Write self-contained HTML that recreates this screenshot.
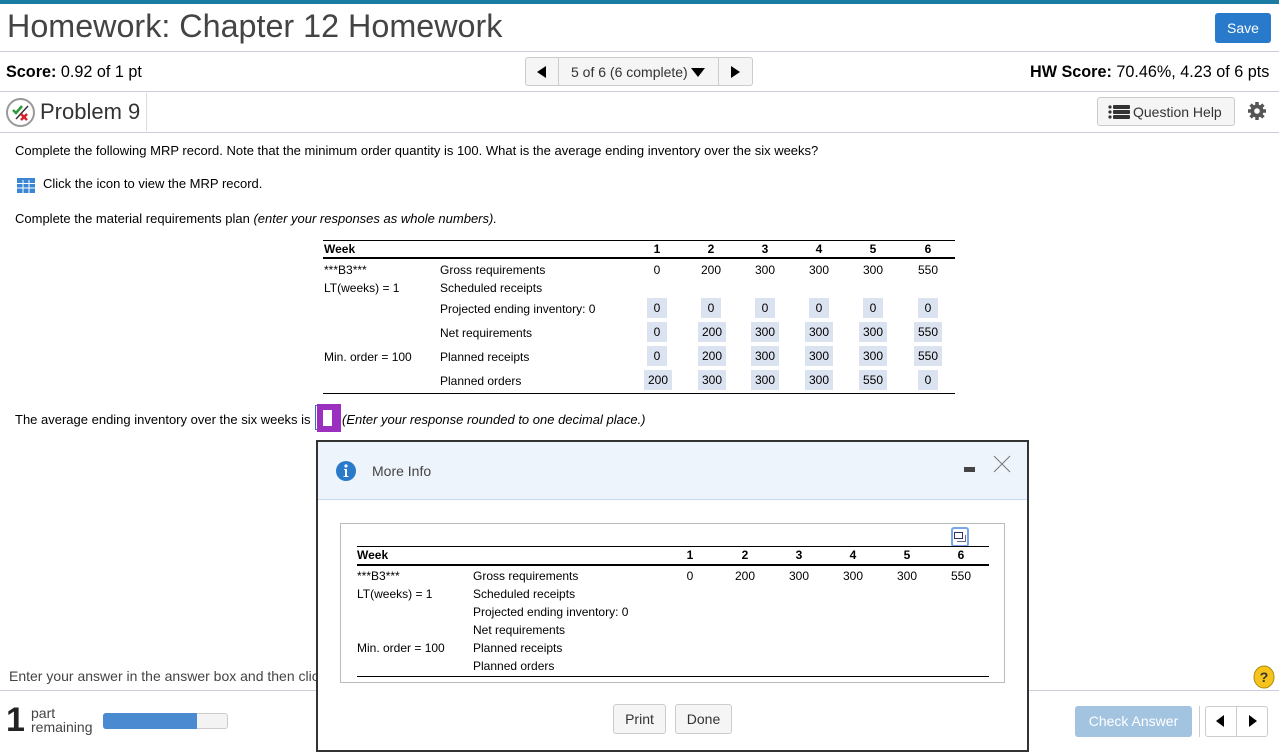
<!DOCTYPE html>
<html><head><meta charset="utf-8"><style>
*{margin:0;padding:0;box-sizing:border-box}
body{width:1279px;height:750px;overflow:hidden;background:#fff;font-family:"Liberation Sans",Arial,sans-serif;color:#000;position:relative;font-size:13px}
.a{position:absolute;white-space:nowrap}
.hl{position:absolute;left:0;width:1279px;height:1px;background:#c9ced8}
.c{position:absolute;text-align:center;width:40px;margin-left:-20px}
.bx{position:absolute;background:#dce3f0;text-align:center;height:20px;line-height:20px}
.btn{position:absolute;border:1px solid #ccc;border-radius:3px;background:#f5f5f5;color:#333;text-align:center}
</style></head><body>
<div class="a" style="left:0;top:0;width:1279px;height:4px;background:#1a7ba3"></div>
<div class="a" style="left:7px;top:8px;font-size:32.3px;color:#444">Homework: Chapter 12 Homework</div>
<div class="a" style="left:1215px;top:13px;width:56px;height:30px;background:#2a7acb;border-radius:3px;color:#fff;font-size:14px;line-height:30px;text-align:center">Save</div>
<div class="hl" style="top:51px"></div>
<div class="a" style="left:6px;top:63px;font-size:16.2px"><b>Score:</b> 0.92 of 1 pt</div>
<div class="btn" style="left:525px;top:57px;width:228px;height:29px"></div>
<div class="a" style="left:558px;top:57px;width:1px;height:29px;background:#ccc"></div>
<div class="a" style="left:718px;top:57px;width:1px;height:29px;background:#ccc"></div>
<svg class="a" style="left:537px;top:66px" width="10" height="12"><path d="M9 0V12L0 6Z" fill="#000"/></svg>
<div class="a" style="left:571px;top:64px;font-size:14px;color:#333">5 of 6 (6 complete)</div>
<svg class="a" style="left:691px;top:68px" width="14" height="9"><path d="M0 0H14L7 9Z" fill="#000"/></svg>
<svg class="a" style="left:731px;top:66px" width="10" height="12"><path d="M0 0V12L9 6Z" fill="#000"/></svg>
<div class="a" style="left:1030px;top:63px;font-size:16.2px"><b>HW Score:</b> 70.46%, 4.23 of 6 pts</div>
<div class="hl" style="top:91px"></div>
<svg class="a" style="left:5px;top:97px" width="31" height="31"><circle cx="15.5" cy="15.5" r="13.5" fill="#fff" stroke="#999" stroke-width="2"/><path d="M8 13l3 3 6-7" stroke="#2a9a3a" stroke-width="2.5" fill="none"/><path d="M11 22L23 9" stroke="#333" stroke-width="1.5"/><path d="M16 17l6 6M22 17l-6 6" stroke="#d8202a" stroke-width="2.5"/></svg>
<div class="a" style="left:40px;top:99px;font-size:22px;color:#333">Problem 9</div>
<div class="a" style="left:146px;top:93px;width:1px;height:38px;background:#ddd"></div>
<div class="btn" style="left:1097px;top:97px;width:138px;height:29px"></div>
<svg class="a" style="left:1108px;top:105px" width="22" height="14"><g fill="#333"><circle cx="2" cy="2" r="1.6"/><circle cx="2" cy="7" r="1.6"/><circle cx="2" cy="12" r="1.6"/><rect x="5" y="0" width="17" height="4" rx="1"/><rect x="5" y="5" width="17" height="4" rx="1"/><rect x="5" y="10" width="17" height="4" rx="1"/></g></svg>
<div class="a" style="left:1133px;top:104px;font-size:14px;color:#333">Question Help</div>
<svg class="a" style="left:1247px;top:101px" width="20" height="20" viewBox="0 0 20 20"><g fill="#555"><circle cx="10" cy="10" r="6.5"/><g stroke="#555" stroke-width="3.5"><path d="M10 1v18M1 10h18M3.6 3.6l12.8 12.8M16.4 3.6L3.6 16.4"/></g></g><circle cx="10" cy="10" r="2.8" fill="#fff"/></svg>
<div class="hl" style="top:132px"></div>
<div class="a" style="left:15px;top:143px">Complete the following MRP record. Note that the minimum order quantity is 100. What is the average ending inventory over the six weeks?</div>
<svg class="a" style="left:17px;top:178px" width="18" height="15"><rect width="18" height="15" fill="#3a86d6"/><g stroke="#fff" stroke-width="1"><path d="M0 5.5h18M0 10h18M6 2v13M12 2v13"/></g></svg>
<div class="a" style="left:43px;top:176px">Click the icon to view the MRP record.</div>
<div class="a" style="left:15px;top:211px">Complete the material requirements plan <i>(enter your responses as whole numbers).</i></div>

<div class="a" style="left:323px;top:240px;width:632px;height:1px;background:#000"></div>
<div class="a" style="left:323px;top:257px;width:632px;height:2px;background:#000"></div>
<div class="a" style="left:323px;top:393px;width:632px;height:1px;background:#000"></div>
<div class="a" style="left:324px;top:242px;font-weight:bold;font-size:12px">Week</div>
<div style="font-size:12px">
<div class="c" style="left:657px;top:242px;font-weight:bold">1</div><div class="c" style="left:711px;top:242px;font-weight:bold">2</div><div class="c" style="left:765px;top:242px;font-weight:bold">3</div><div class="c" style="left:819px;top:242px;font-weight:bold">4</div><div class="c" style="left:873px;top:242px;font-weight:bold">5</div><div class="c" style="left:928px;top:242px;font-weight:bold">6</div>
<div class="a" style="left:324px;top:263px">***B3***</div><div class="a" style="left:440px;top:263px">Gross requirements</div>
<div class="c" style="left:657px;top:263px">0</div><div class="c" style="left:711px;top:263px">200</div><div class="c" style="left:765px;top:263px">300</div><div class="c" style="left:819px;top:263px">300</div><div class="c" style="left:873px;top:263px">300</div><div class="c" style="left:928px;top:263px">550</div>
<div class="a" style="left:324px;top:281px">LT(weeks) = 1</div><div class="a" style="left:440px;top:281px">Scheduled receipts</div>
<div class="a" style="left:440px;top:302px">Projected ending inventory: 0</div>
<div class="bx" style="left:647px;top:298px;width:20px">0</div><div class="bx" style="left:701px;top:298px;width:20px">0</div><div class="bx" style="left:755px;top:298px;width:20px">0</div><div class="bx" style="left:809px;top:298px;width:20px">0</div><div class="bx" style="left:863px;top:298px;width:20px">0</div><div class="bx" style="left:918px;top:298px;width:20px">0</div>
<div class="a" style="left:440px;top:326px">Net requirements</div>
<div class="bx" style="left:647px;top:322px;width:20px">0</div><div class="bx" style="left:698px;top:322px;width:28px">200</div><div class="bx" style="left:751px;top:322px;width:28px">300</div><div class="bx" style="left:805px;top:322px;width:28px">300</div><div class="bx" style="left:859px;top:322px;width:28px">300</div><div class="bx" style="left:914px;top:322px;width:28px">550</div>
<div class="a" style="left:324px;top:350px">Min. order = 100</div><div class="a" style="left:440px;top:350px">Planned receipts</div>
<div class="bx" style="left:647px;top:346px;width:20px">0</div><div class="bx" style="left:698px;top:346px;width:28px">200</div><div class="bx" style="left:751px;top:346px;width:28px">300</div><div class="bx" style="left:805px;top:346px;width:28px">300</div><div class="bx" style="left:859px;top:346px;width:28px">300</div><div class="bx" style="left:914px;top:346px;width:28px">550</div>
<div class="a" style="left:440px;top:374px">Planned orders</div>
<div class="bx" style="left:644px;top:370px;width:28px">200</div><div class="bx" style="left:698px;top:370px;width:28px">300</div><div class="bx" style="left:751px;top:370px;width:28px">300</div><div class="bx" style="left:805px;top:370px;width:28px">300</div><div class="bx" style="left:859px;top:370px;width:28px">550</div><div class="bx" style="left:918px;top:370px;width:20px">0</div>
</div>
<div class="a" style="left:15px;top:412px">The average ending inventory over the six weeks is</div>
<div class="a" style="left:315px;top:405px;width:3px;height:25px;border:1px solid #37a"></div>
<div class="a" style="left:317px;top:404px;width:24px;height:28px;background:#9b2fc0"></div>
<div class="a" style="left:323px;top:410px;width:9px;height:16px;background:#fff"></div>
<div class="a" style="left:342px;top:412px;font-style:italic">(Enter your response rounded to one decimal place.)</div>

<div class="a" style="left:9px;top:668px;font-size:14px;color:#444">Enter your answer in the answer box and then click Check Answer.</div>
<svg class="a" style="left:1253px;top:665px" width="22" height="24"><ellipse cx="11" cy="12" rx="10" ry="11" fill="#f5c31a" stroke="#b08a10"/><text x="11" y="17" text-anchor="middle" font-family="Liberation Sans" font-weight="bold" font-size="14" fill="#333">?</text></svg>
<div class="hl" style="top:690px"></div>
<div class="a" style="left:6px;top:700px;font-size:34px;font-weight:bold;color:#222;line-height:40px">1</div>
<div class="a" style="left:31px;top:706px;font-size:14px;color:#444;line-height:14px">part<br>remaining</div>
<div class="a" style="left:103px;top:713px;width:125px;height:16px;border:1px solid #ccc;border-radius:3px;background:#f3f3f3"></div>
<div class="a" style="left:103px;top:713px;width:94px;height:16px;background:#4a8ad0;border-radius:3px 0 0 3px"></div>
<div class="a" style="left:1075px;top:706px;width:117px;height:31px;background:#a3c4e0;border-radius:3px;color:#fff;font-size:14px;line-height:31px;text-align:center">Check Answer</div>
<div class="a" style="left:1199px;top:706px;width:1px;height:31px;background:#ccc"></div>
<div class="btn" style="left:1205px;top:706px;width:63px;height:31px;background:#fff"></div>
<div class="a" style="left:1236px;top:707px;width:1px;height:29px;background:#ccc"></div>
<svg class="a" style="left:1216px;top:715px" width="9" height="12"><path d="M8 0V12L0 6Z" fill="#000"/></svg>
<svg class="a" style="left:1249px;top:715px" width="9" height="12"><path d="M0 0V12L8 6Z" fill="#000"/></svg>

<div class="a" style="left:316px;top:440px;width:713px;height:312px;border:2px solid #333;background:#fff"></div>
<div class="a" style="left:318px;top:442px;width:709px;height:58px;background:#eef4fc;border-bottom:1px solid #c5dcf0"></div>
<svg class="a" style="left:335px;top:460px" width="22" height="22"><circle cx="11" cy="11" r="10" fill="#2a7acb"/><circle cx="11" cy="6" r="1.6" fill="#fff"/><path d="M9 9h3v7h1.5v1h-5v-1h1.5v-6h-1z" fill="#fff"/></svg>
<div class="a" style="left:372px;top:463px;font-size:14px;color:#444">More Info</div>
<div class="a" style="left:964px;top:467px;width:11px;height:5px;background:#444"></div>
<svg class="a" style="left:993px;top:455px" width="18" height="18"><path d="M1 1L17 17M17 1L1 17" stroke="#777" stroke-width="1"/></svg>
<div class="a" style="left:340px;top:523px;width:665px;height:160px;border:1px solid #bbb"></div>
<div class="a" style="left:951px;top:527px;width:18px;height:20px;border:2px solid #7aa6e8;border-radius:3px"></div>
<svg class="a" style="left:954px;top:532px" width="12" height="10"><rect x="0.5" y="0.5" width="8" height="6" fill="none" stroke="#336" /><path d="M3 9.5h8.5V3" fill="none" stroke="#669"/></svg>
<div class="a" style="left:357px;top:546px;width:632px;height:1px;background:#000"></div>
<div class="a" style="left:357px;top:564px;width:632px;height:2px;background:#000"></div>
<div class="a" style="left:357px;top:676px;width:632px;height:1px;background:#000"></div>
<div style="font-size:12px">
<div class="a" style="left:357px;top:548px;font-weight:bold">Week</div>
<div class="c" style="left:690px;top:548px;font-weight:bold">1</div><div class="c" style="left:745px;top:548px;font-weight:bold">2</div><div class="c" style="left:799px;top:548px;font-weight:bold">3</div><div class="c" style="left:853px;top:548px;font-weight:bold">4</div><div class="c" style="left:907px;top:548px;font-weight:bold">5</div><div class="c" style="left:961px;top:548px;font-weight:bold">6</div>
<div class="a" style="left:357px;top:569px">***B3***</div><div class="a" style="left:473px;top:569px">Gross requirements</div>
<div class="c" style="left:690px;top:569px">0</div><div class="c" style="left:745px;top:569px">200</div><div class="c" style="left:799px;top:569px">300</div><div class="c" style="left:853px;top:569px">300</div><div class="c" style="left:907px;top:569px">300</div><div class="c" style="left:961px;top:569px">550</div>
<div class="a" style="left:357px;top:587px">LT(weeks) = 1</div><div class="a" style="left:473px;top:587px">Scheduled receipts</div>
<div class="a" style="left:473px;top:605px">Projected ending inventory: 0</div>
<div class="a" style="left:473px;top:623px">Net requirements</div>
<div class="a" style="left:357px;top:641px">Min. order = 100</div><div class="a" style="left:473px;top:641px">Planned receipts</div>
<div class="a" style="left:473px;top:659px">Planned orders</div>
</div>
<div class="btn" style="left:613px;top:704px;width:53px;height:30px;line-height:28px;font-size:14px">Print</div>
<div class="btn" style="left:675px;top:704px;width:57px;height:30px;line-height:28px;font-size:14px">Done</div>
</body></html>
